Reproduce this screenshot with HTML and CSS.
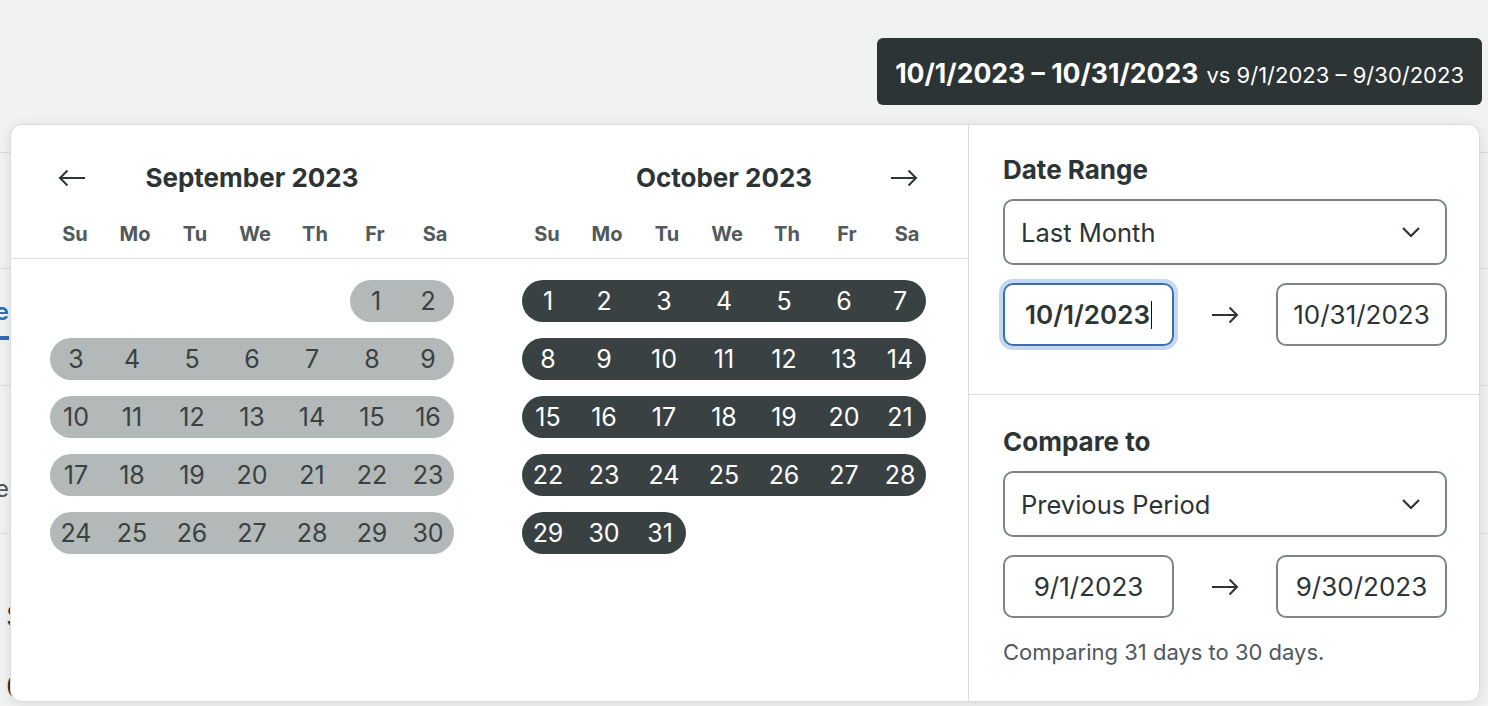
FILE: index.html
```html
<!DOCTYPE html>
<html>
<head>
    <title>Date Range Picker</title>
    <meta name="viewport" content="width=device-width, initial-scale=1">
    <link rel="stylesheet" href="styles.css">
</head>
<body>
    <header class="toolbar">
        <button class="range-toggle">
            <strong>10/1/2023 – 10/31/2023</strong>
            <span class="vs">vs 9/1/2023 – 9/30/2023</span>
        </button>
    </header>

    <!-- page content sitting behind the open picker -->
    <div class="backdrop">
        <div class="bd-row bd-first"></div>
        <div class="bd-row bd-tabs"><div class="peek"><span class="tab">Revenue</span></div></div>
        <div class="bd-row bd-third"><div class="peek"><span class="muted">Net sale</span></div></div>
        <div class="bd-row bd-last">
            <span class="figure">$0.00</span>
            <span class="figure">0</span>
        </div>
    </div>

    <div class="picker">
        <div class="calendars">
            <div class="cal-top">
                <div class="month">
                    <div class="month-head">
                        <button class="nav" aria-label="Previous month">
                            <svg width="28" height="18" viewBox="0 0 28 18"><path d="M27 9H2M9.5 1.5L2 9l7.5 7.5" fill="none" stroke="#2c3436" stroke-width="2"/></svg>
                        </button>
                        <h2>September 2023</h2>
                        <span></span>
                    </div>
                    <div class="weekdays">
                        <span>Su</span><span>Mo</span><span>Tu</span><span>We</span><span>Th</span><span>Fr</span><span>Sa</span>
                    </div>
                </div>
                <div class="month">
                    <div class="month-head">
                        <span></span>
                        <h2>October 2023</h2>
                        <button class="nav" aria-label="Next month">
                            <svg width="28" height="18" viewBox="0 0 28 18"><path d="M1 9h25M18.5 1.5L26 9l-7.5 7.5" fill="none" stroke="#2c3436" stroke-width="2"/></svg>
                        </button>
                    </div>
                    <div class="weekdays">
                        <span>Su</span><span>Mo</span><span>Tu</span><span>We</span><span>Th</span><span>Fr</span><span>Sa</span>
                    </div>
                </div>
            </div>

            <div class="cal-days">
                <div class="days compare">
                    <div class="day start" style="grid-column-start: 6">1</div><div class="day end">2</div>
                    <div class="day start">3</div><div class="day">4</div><div class="day">5</div><div class="day">6</div><div class="day">7</div><div class="day">8</div><div class="day end">9</div>
                    <div class="day start">10</div><div class="day">11</div><div class="day">12</div><div class="day">13</div><div class="day">14</div><div class="day">15</div><div class="day end">16</div>
                    <div class="day start">17</div><div class="day">18</div><div class="day">19</div><div class="day">20</div><div class="day">21</div><div class="day">22</div><div class="day end">23</div>
                    <div class="day start">24</div><div class="day">25</div><div class="day">26</div><div class="day">27</div><div class="day">28</div><div class="day">29</div><div class="day end">30</div>
                </div>
                <div class="days selected">
                    <div class="day start">1</div><div class="day">2</div><div class="day">3</div><div class="day">4</div><div class="day">5</div><div class="day">6</div><div class="day end">7</div>
                    <div class="day start">8</div><div class="day">9</div><div class="day">10</div><div class="day">11</div><div class="day">12</div><div class="day">13</div><div class="day end">14</div>
                    <div class="day start">15</div><div class="day">16</div><div class="day">17</div><div class="day">18</div><div class="day">19</div><div class="day">20</div><div class="day end">21</div>
                    <div class="day start">22</div><div class="day">23</div><div class="day">24</div><div class="day">25</div><div class="day">26</div><div class="day">27</div><div class="day end">28</div>
                    <div class="day start">29</div><div class="day">30</div><div class="day end">31</div>
                </div>
            </div>
        </div>

        <aside class="options">
            <section class="option-group">
                <h3>Date Range</h3>
                <div class="select">
                    <span>Last Month</span>
                    <svg width="20" height="12" viewBox="0 0 20 12"><path d="M2 2l8 8 8-8" fill="none" stroke="#2c3436" stroke-width="2.2"/></svg>
                </div>
                <div class="date-row">
                    <div class="date-field focused">10/1/2023<span class="caret"></span></div>
                    <span class="to">
                        <svg width="28" height="18" viewBox="0 0 28 18"><path d="M1 9h25M18.5 1.5L26 9l-7.5 7.5" fill="none" stroke="#2c3436" stroke-width="2"/></svg>
                    </span>
                    <div class="date-field">10/31/2023</div>
                </div>
            </section>
            <section class="option-group">
                <h3>Compare to</h3>
                <div class="select">
                    <span>Previous Period</span>
                    <svg width="20" height="12" viewBox="0 0 20 12"><path d="M2 2l8 8 8-8" fill="none" stroke="#2c3436" stroke-width="2.2"/></svg>
                </div>
                <div class="date-row">
                    <div class="date-field">9/1/2023</div>
                    <span class="to">
                        <svg width="28" height="18" viewBox="0 0 28 18"><path d="M1 9h25M18.5 1.5L26 9l-7.5 7.5" fill="none" stroke="#2c3436" stroke-width="2"/></svg>
                    </span>
                    <div class="date-field">9/30/2023</div>
                </div>
                <p class="note">Comparing 31 days to 30 days.</p>
            </section>
        </aside>
    </div>
</body>
</html>
```

FILE: styles.css
```css
* {
    box-sizing: border-box;
}

body {
    margin: 0;
    height: 706px;
    overflow: hidden;
    position: relative;
    background-color: #f1f3f2;
    color: #2c3436;
    font-family: Inter, "Noto Sans", sans-serif;
}

button {
    font-family: inherit;
    cursor: pointer;
}

/* top bar */

.toolbar {
    display: flex;
    justify-content: flex-end;
    padding: 38px 6px 0 0;
}

.range-toggle {
    display: flex;
    align-items: baseline;
    gap: 8px;
    height: 67px;
    padding: 19px 18px 0;
    border: 0;
    border-radius: 6px;
    background-color: #2c3436;
    color: #fff;
}

.range-toggle strong {
    font-size: 26.6px;
    font-weight: 700;
}

.range-toggle .vs {
    font-size: 22px;
}

/* background page */

.backdrop {
    margin-top: 47px;
}

.bd-row {
    border-top: 1px solid #dcdcde;
}

.bd-first {
    height: 116px;
}

.bd-tabs {
    height: 117px;
    padding-top: 28px;
}

.peek {
    width: 9px;
    display: flex;
    justify-content: flex-end;
    white-space: nowrap;
}

.tab {
    display: block;
    padding-bottom: 10px;
    border-bottom: 4px solid #2f6db5;
    color: #2f6db5;
    font-size: 24px;
    font-weight: 600;
}

.bd-third {
    height: 148px;
    padding-top: 88px;
}

.muted {
    color: #50575e;
    font-size: 24px;
}

.bd-last {
    display: flex;
    flex-direction: column;
    gap: 38px;
    padding: 66px 0 0 6px;
}

.figure {
    font-size: 30px;
    line-height: 32px;
    color: #2c3436;
}

/* picker */

.picker {
    position: absolute;
    top: 124px;
    left: 10px;
    width: 1470px;
    height: 578px;
    display: flex;
    background-color: #fff;
    border: 1px solid #dcdcde;
    border-radius: 12px;
    box-shadow: 0 2px 14px rgba(0, 0, 0, 0.1);
    overflow: hidden;
}

.calendars {
    width: 958px;
    border-right: 1px solid #dcdcde;
}

.cal-top,
.cal-days {
    display: flex;
    gap: 52px;
    padding: 0 31px;
}

.cal-top {
    padding-top: 38px;
    padding-bottom: 10px;
    border-bottom: 1px solid #dcdcde;
}

.cal-days {
    padding-top: 21px;
}

.month {
    width: 420px;
}

.month-head {
    display: grid;
    grid-template-columns: 60px 1fr 60px;
    align-items: center;
}

.month-head h2 {
    margin: 0;
    font-size: 26px;
    line-height: 30px;
    font-weight: 700;
    text-align: center;
}

.nav {
    display: flex;
    justify-content: center;
    padding: 0;
    border: 0;
    background: none;
}

.weekdays {
    display: grid;
    grid-template-columns: repeat(7, 60px);
    margin-top: 27px;
    padding-left: 3px;
    line-height: 28px;
    font-size: 20px;
    font-weight: 700;
    color: #50595b;
    text-align: center;
}

.days {
    display: grid;
    grid-template-columns: repeat(7, 60px);
    grid-auto-rows: 42px;
    row-gap: 16px;
    width: 420px;
}

.day {
    font-size: 25px;
    line-height: 42px;
    text-align: center;
}

.day.start {
    margin-left: 8px;
    border-radius: 21px 0 0 21px;
}

.day.end {
    margin-right: 8px;
    border-radius: 0 21px 21px 0;
}

.compare .day {
    background-color: #b3b8b8;
    color: #394143;
}

.selected .day {
    background-color: #394143;
    color: #fff;
}

/* options panel */

.options {
    flex: 1;
}

.option-group {
    padding: 30px 32px 48px 34px;
}

.option-group + .option-group {
    padding-top: 32px;
    padding-bottom: 0;
    border-top: 1px solid #dcdcde;
}

.option-group h3 {
    margin: 0;
    font-size: 26px;
    line-height: 30px;
    font-weight: 700;
}

.select {
    display: flex;
    align-items: center;
    justify-content: space-between;
    height: 66px;
    margin-top: 14px;
    padding: 0 24px 0 16px;
    border: 2px solid #7c8486;
    border-radius: 10px;
    font-size: 25.5px;
}

.date-row {
    display: flex;
    align-items: center;
    justify-content: space-between;
    margin-top: 18px;
}

.date-field {
    width: 171px;
    height: 63px;
    display: flex;
    align-items: center;
    justify-content: center;
    border: 2px solid #7c8486;
    border-radius: 10px;
    font-size: 26px;
}

.date-field.focused {
    border-color: #3a6db3;
    box-shadow: 0 0 0 4px #c6d8ee;
    font-weight: 600;
}

.caret {
    width: 1px;
    height: 28px;
    margin-left: 1px;
    background-color: #111;
}

.to {
    display: flex;
}

.note {
    margin: 20px 0 0;
    font-size: 22px;
    line-height: 28px;
    color: #50575e;
}
```
